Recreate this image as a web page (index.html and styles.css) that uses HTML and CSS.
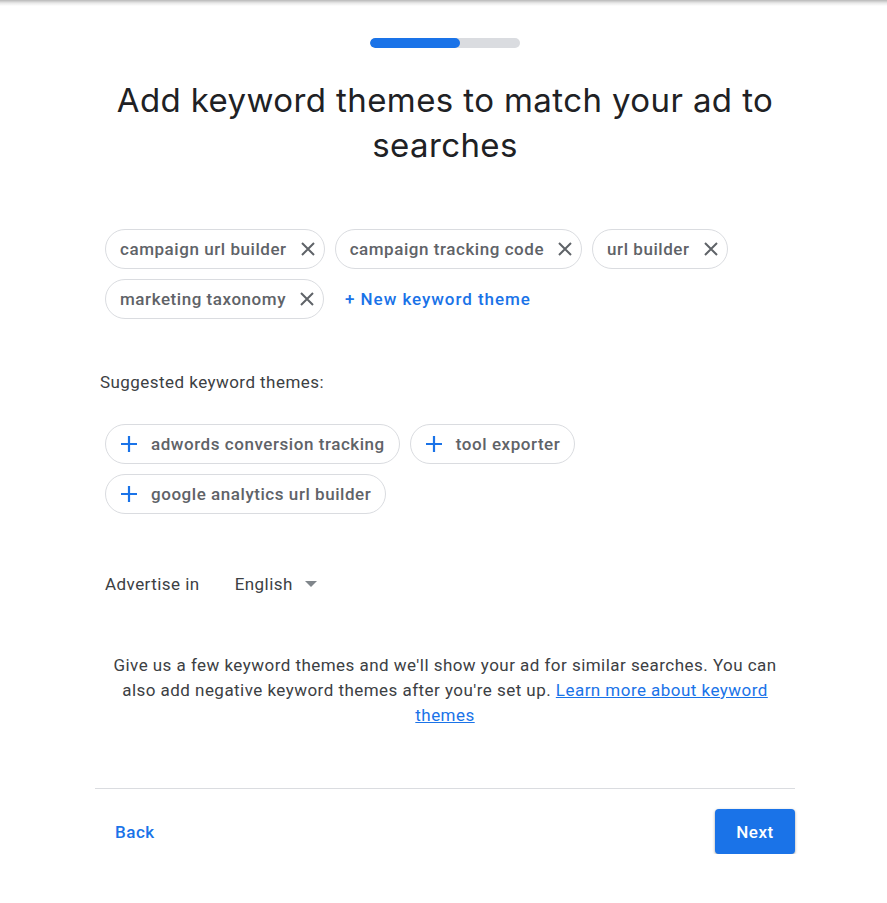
FILE: index.html
```html
<!DOCTYPE html>
<html>
<head>
<meta charset="utf-8">
<link rel="stylesheet" href="styles.css">
</head>
<body>
<div class="topshadow"></div>
<main class="page">
  <div class="progress"><div class="progress-fill"></div></div>
  <h1 class="title">Add keyword themes to match your ad to searches</h1>

  <div class="chips selected">
    <span class="chip">campaign url builder<svg class="x" viewBox="0 0 14 14"><path d="M1 1L13 13M13 1L1 13"/></svg></span>
    <span class="chip">campaign tracking code<svg class="x" viewBox="0 0 14 14"><path d="M1 1L13 13M13 1L1 13"/></svg></span>
    <span class="chip">url builder<svg class="x" viewBox="0 0 14 14"><path d="M1 1L13 13M13 1L1 13"/></svg></span>
    <span class="chip">marketing taxonomy<svg class="x" viewBox="0 0 14 14"><path d="M1 1L13 13M13 1L1 13"/></svg></span>
    <span class="newtheme">+ New keyword theme</span>
  </div>

  <p class="label">Suggested keyword themes:</p>

  <div class="chips suggested">
    <span class="chip add"><svg class="plus" viewBox="0 0 18 18"><path d="M9 1V17M1 9H17"/></svg>adwords conversion tracking</span>
    <span class="chip add"><svg class="plus" viewBox="0 0 18 18"><path d="M9 1V17M1 9H17"/></svg>tool exporter</span>
    <span class="chip add"><svg class="plus" viewBox="0 0 18 18"><path d="M9 1V17M1 9H17"/></svg>google analytics url builder</span>
  </div>

  <div class="advertise">
    <span class="adv-label">Advertise in</span>
    <span class="lang">English<span class="caret"></span></span>
  </div>

  <p class="desc">Give us a few keyword themes and we'll show your ad for similar searches. You can also add negative keyword themes after you're set up. <a href="#" class="link">Learn more about keyword themes</a></p>

  <div class="footer">
    <span class="back">Back</span>
    <span class="next">Next</span>
  </div>
</main>
</body>
</html>
```
FILE: styles.css
```css
html, body {
  margin: 0;
  padding: 0;
  background: #fff;
}
body {
  font-family: Roboto, "Liberation Sans", sans-serif;
  color: #3c4043;
}
.topshadow {
  height: 6px;
  background: linear-gradient(#b8b8b8, #e8e8e8 50%, #fff);
}
.page {
  width: 700px;
  margin-left: 95px;
  display: flex;
  flex-direction: column;
}
.progress {
  align-self: center;
  width: 150px;
  height: 10px;
  border-radius: 5px;
  background: #dadce0;
  margin-top: 32px;
  overflow: hidden;
}
.progress-fill {
  width: 90px;
  height: 10px;
  border-radius: 5px;
  background: #1a73e8;
}
.title {
  font-family: Inter, Roboto, sans-serif;
  font-weight: 400;
  font-size: 33px;
  line-height: 45px;
  color: #202124;
  text-align: center;
  margin: 30px 10px 0;
  letter-spacing: 0.4px;
}
.chips {
  display: flex;
  flex-wrap: wrap;
  gap: 10px;
  padding-left: 10px;
  align-items: center;
}
.selected {
  margin-top: 61px;
}
.chip {
  box-sizing: border-box;
  height: 40px;
  border: 1px solid #dadce0;
  border-radius: 20px;
  display: inline-flex;
  align-items: center;
  padding: 0 9px 0 14px;
  font-size: 17px;
  font-weight: 500;
  letter-spacing: 0.55px;
  color: #5f6368;
}
.x {
  width: 14px;
  height: 14px;
  margin-left: 14px;
  fill: none;
  stroke: #5f6368;
  stroke-width: 2;
}
.newtheme {
  font-size: 17px;
  font-weight: 500;
  letter-spacing: 0.95px;
  color: #1a73e8;
  margin-left: 11px;
}
.label {
  margin: 51px 0 0;
  padding-left: 5px;
  font-size: 17px;
  line-height: 24px;
  letter-spacing: 0.45px;
  color: #3c4043;
}
.suggested {
  margin-top: 30px;
}
.chip.add {
  padding: 0 14px 0 14px;
}
.plus {
  width: 18px;
  height: 18px;
  margin-right: 13px;
  fill: none;
  stroke: #1a73e8;
  stroke-width: 2.2;
}
.advertise {
  margin-top: 50px;
  height: 40px;
  display: flex;
  align-items: center;
  padding-left: 10px;
  font-size: 17px;
  letter-spacing: 0.45px;
  color: #3c4043;
}
.lang {
  margin-left: 35px;
  display: inline-flex;
  align-items: center;
}
.caret {
  width: 0;
  height: 0;
  border-left: 6px solid transparent;
  border-right: 6px solid transparent;
  border-top: 6px solid #80868b;
  margin-left: 12px;
}
.desc {
  margin: 49px 0 0;
  padding: 0 14px;
  text-align: center;
  font-size: 17px;
  line-height: 25px;
  letter-spacing: 0.46px;
  color: #3c4043;
}
.link {
  color: #1a73e8;
  text-decoration: underline;
}
.footer {
  margin-top: 60px;
  border-top: 1px solid #dadce0;
  padding-top: 20px;
  display: flex;
  justify-content: space-between;
  align-items: center;
}
.back {
  margin-left: 20px;
  font-size: 17px;
  font-weight: 500;
  letter-spacing: 0.5px;
  color: #1a73e8;
}
.next {
  box-sizing: border-box;
  width: 80px;
  height: 45px;
  border-radius: 4px;
  background: #1a73e8;
  color: #fff;
  font-size: 17px;
  font-weight: 500;
  letter-spacing: 0.5px;
  display: flex;
  align-items: center;
  justify-content: center;
  box-shadow: 0 1px 3px rgba(60,64,67,0.35), 0 1px 2px rgba(60,64,67,0.2);
}
```
